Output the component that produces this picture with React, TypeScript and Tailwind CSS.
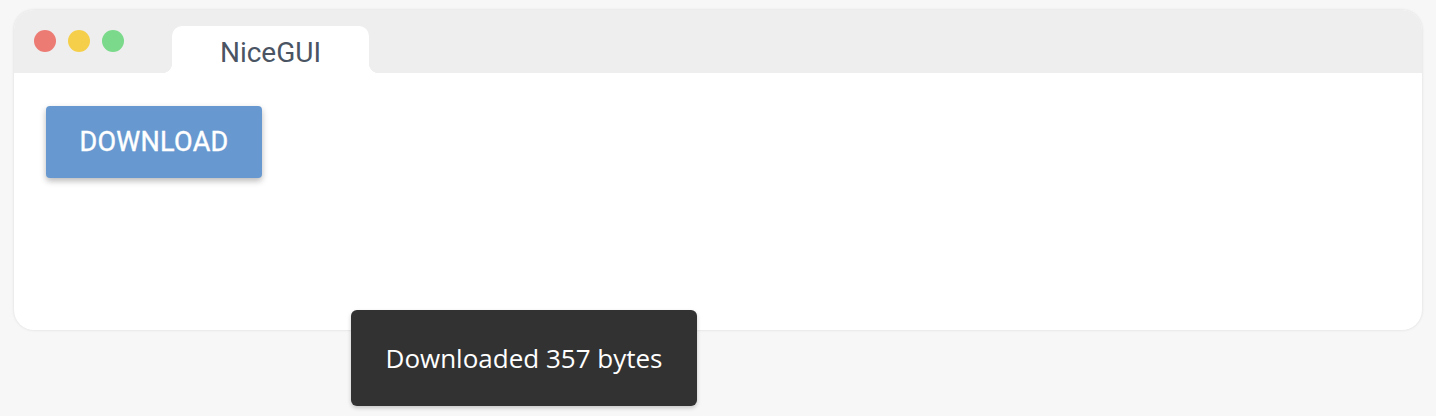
import React from "react";

const App: React.FC = () => {
  return (
    <div
      className="relative w-full h-[416px] bg-[#f7f7f7] pt-[10px] px-[14px]"
      style={{ fontFamily: "Roboto, 'Liberation Sans', sans-serif" }}
    >
      {/* window */}
      <div className="h-[320px] rounded-[20px] bg-white overflow-hidden shadow-[0_0_3px_rgba(0,0,0,0.12)]">
        {/* title bar */}
        <div className="h-[63px] bg-[#eeeeee] flex items-start">
          <div className="flex gap-[12px] pl-[20px] pt-[20px]">
            <span className="w-[22px] h-[22px] rounded-full bg-[#ec7b74]" />
            <span className="w-[22px] h-[22px] rounded-full bg-[#f5cf4a]" />
            <span className="w-[22px] h-[22px] rounded-full bg-[#7ad98a]" />
          </div>
          <div className="relative ml-[48px] mt-[16px] w-[197px] h-[47px] bg-white rounded-t-[10px] flex items-center justify-center pt-[6px]">
            <span className="absolute left-[-10px] bottom-0 w-[10px] h-[10px] bg-[radial-gradient(circle_at_0_0,#eeeeee_10px,#ffffff_10.5px)]" />
            <span className="absolute right-[-10px] bottom-0 w-[10px] h-[10px] bg-[radial-gradient(circle_at_100%_0,#eeeeee_10px,#ffffff_10.5px)]" />
            <span className="text-[28px] text-[#4a5463]">NiceGUI</span>
          </div>
        </div>

        {/* content */}
        <div className="pl-[32px] pt-[33px]">
          <button className="w-[216px] h-[72px] rounded-[4px] bg-[#6799d0] text-white text-[27px] font-normal tracking-[0.3px] [-webkit-text-stroke:0.4px_white] shadow-[0_3px_6px_rgba(0,0,0,0.28)]">
            DOWNLOAD
          </button>
        </div>
      </div>

      {/* notification */}
      <div
        className="absolute left-[351px] top-[310px] w-[346px] h-[96px] rounded-[6px] bg-[#323232] flex items-center justify-center shadow-[0_2px_4px_rgba(0,0,0,0.2)]"
        style={{ fontFamily: "'Open Sans', 'Noto Sans', sans-serif" }}
      >
        <span className="text-[26px] text-white">Downloaded 357 bytes</span>
      </div>
    </div>
  );
};

export default App;
